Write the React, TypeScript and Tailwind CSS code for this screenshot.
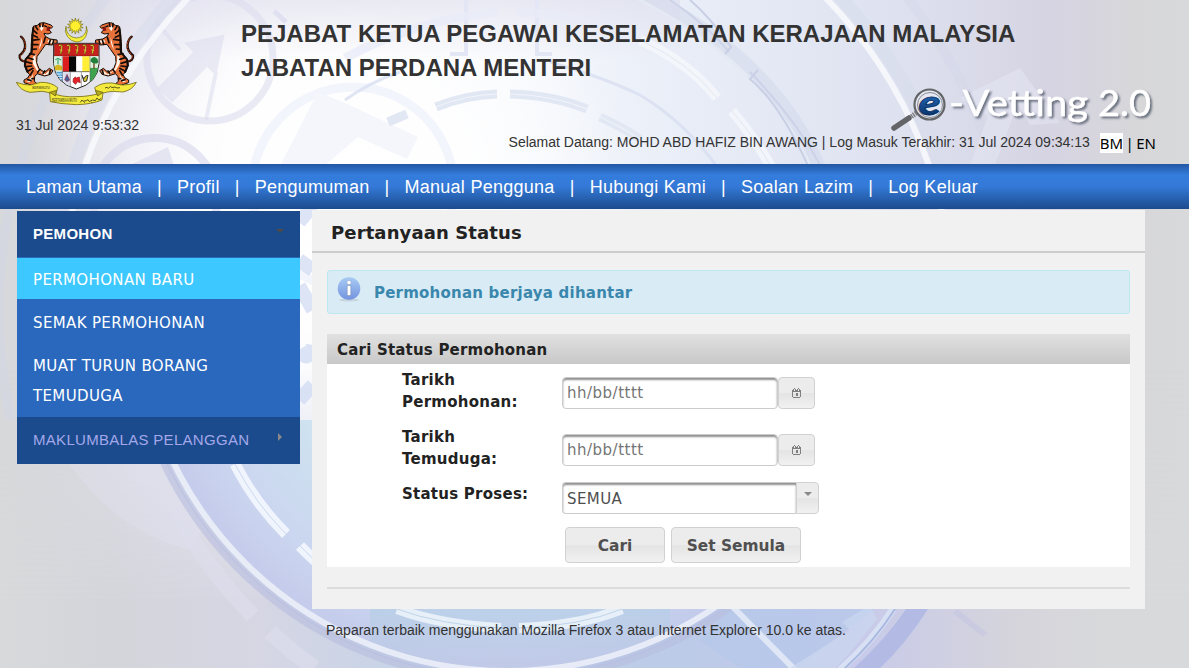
import React from "react";

const VERDANA = "font-['DejaVu_Sans',sans-serif]";

function Backdrop() {
  return (
    <svg className="absolute inset-0 -z-10 h-full w-full" viewBox="0 0 1189 668" preserveAspectRatio="none" aria-hidden="true">
      <defs>
        <linearGradient id="base" x1="0" x2="1" y1="0" y2="0">
          <stop offset="0" stopColor="#d7d8da" />
          <stop offset="0.05" stopColor="#d9d9df" />
          <stop offset="0.13" stopColor="#e3e2f0" />
          <stop offset="0.22" stopColor="#f4f4fb" />
          <stop offset="0.42" stopColor="#f7f9fd" />
          <stop offset="0.58" stopColor="#e8edf7" />
          <stop offset="0.74" stopColor="#dfe3f1" />
          <stop offset="0.88" stopColor="#d6d4e3" />
          <stop offset="0.96" stopColor="#d7d7d9" />
          <stop offset="1" stopColor="#d8d9db" />
        </linearGradient>
        <radialGradient id="glow" cx="330" cy="190" r="300" gradientUnits="userSpaceOnUse">
          <stop offset="0" stopColor="#ffffff" />
          <stop offset="0.45" stopColor="#ffffff" stopOpacity="0.9" />
          <stop offset="1" stopColor="#ffffff" stopOpacity="0" />
        </radialGradient>
        <linearGradient id="topShade" x1="0" x2="0" y1="0" y2="1">
          <stop offset="0" stopColor="#dcdbeb" stopOpacity="0.55" />
          <stop offset="1" stopColor="#dcdbeb" stopOpacity="0" />
        </linearGradient>
        <linearGradient id="low" x1="0" x2="1" y1="0" y2="0">
          <stop offset="0" stopColor="#d8d9db" />
          <stop offset="0.09" stopColor="#d4d5da" />
          <stop offset="0.22" stopColor="#d6d6e4" />
          <stop offset="0.4" stopColor="#bed2e9" />
          <stop offset="0.58" stopColor="#bccbe8" />
          <stop offset="0.72" stopColor="#c7caea" />
          <stop offset="0.85" stopColor="#d5d4dc" />
          <stop offset="0.93" stopColor="#d8d9db" />
          <stop offset="1" stopColor="#d8d9db" />
        </linearGradient>
        <linearGradient id="fade" x1="0" x2="0" y1="0" y2="1">
          <stop offset="0.55" stopColor="#fff" stopOpacity="0" />
          <stop offset="0.9" stopColor="#fff" />
        </linearGradient>
        <mask id="lowMask">
          <rect width="1189" height="668" fill="url(#fade)" />
        </mask>
        <radialGradient id="disc" cx="507" cy="305" r="372" gradientUnits="userSpaceOnUse">
          <stop offset="0.6" stopColor="#cfe6f1" />
          <stop offset="0.85" stopColor="#cbd7f1" />
          <stop offset="1" stopColor="#c4caec" />
        </radialGradient>
        <linearGradient id="discBlue" x1="0" x2="0" y1="600" y2="668" gradientUnits="userSpaceOnUse">
          <stop offset="0" stopColor="#b4cfe6" />
          <stop offset="1" stopColor="#bfc9e6" />
        </linearGradient>
        <clipPath id="lowerHalf">
          <rect x="0" y="420" width="1189" height="248" />
        </clipPath>
        <clipPath id="upperHalf">
          <rect x="0" y="0" width="1189" height="420" />
        </clipPath>
        <clipPath id="discClip">
          <circle cx="507" cy="300" r="370" />
        </clipPath>
      </defs>
      <rect width="1189" height="668" fill="url(#base)" />
      <rect width="1189" height="668" fill="url(#glow)" />
      <rect x="120" width="560" height="60" fill="url(#topShade)" />
      <rect width="1189" height="668" fill="url(#low)" mask="url(#lowMask)" />

      <g clipPath="url(#upperHalf)" fill="none">
        <circle cx="210" cy="58" r="63" stroke="#dcdcee" strokeWidth="7" opacity="0.6" />
        <path d="M160 88 L196 52 L188 44 L222 37 L215 72 L207 64 L172 100Z M180 50 L156 22 M216 72 L206 120" fill="#dadbed" stroke="#dadbed" strokeWidth="4" opacity="0.5" />
        <circle cx="155" cy="200" r="62" stroke="#d9d9ed" strokeWidth="8" opacity="0.65" />
        <path d="M128 166 L168 147 L174 166Z" fill="#d9d9ed" opacity="0.6" />
        <circle cx="353" cy="188" r="101" stroke="#f3f5fc" strokeWidth="9" />
        <path d="M280 166 L318 92 L345 103 L418 137 L407 159 L358 137 L324 166Z" fill="#f4f6fc" />
        <path d="M274 11 L286 22" stroke="#dfe1f1" strokeWidth="5" />
        <path d="M466 0V54 H450 M537 0V54 H552" stroke="#e3e6f5" strokeWidth="4" />
        <path d="M345 58 Q415 20 498 12 M518 12 Q620 18 690 66" stroke="#e9ecf7" strokeWidth="9" opacity="0.8" />
        <path d="M345 100 Q370 82 400 72 M550 62 Q605 78 640 95 Q685 122 718 168" stroke="#d7def0" strokeWidth="3" opacity="0.75" />
        <path d="M436 107 Q465 95 497 94 M510 94 Q552 95 587 109 M600 117 Q622 127 640 139 M388 122 L407 114" stroke="#e2e7f4" strokeWidth="9" />
        <path d="M436 107 Q465 95 497 94 M510 94 Q552 95 587 109 M600 117 Q622 127 640 139" stroke="#f2f5fb" strokeWidth="1" />
        <path d="M640 40 Q690 63 717 98 M732 111 Q755 138 773 170" stroke="#f5f7fb" strokeWidth="10" opacity="0.85" />
        <path d="M640 40 Q690 63 717 98 M732 111 Q755 138 773 170" stroke="#e3e7f1" strokeWidth="1" />
        <path d="M640 -8 Q775 60 820 170" stroke="#d3d9eb" strokeWidth="14" opacity="0.55" />
        <path d="M632 -4 Q768 64 812 170" stroke="#e5e9f4" strokeWidth="3" />
        <path d="M670 0 Q707 25 729 52 M750 72 Q795 118 822 168" stroke="#ccd3e8" strokeWidth="2" />
        <path d="M690 0 Q710 17 731 47 L725 54 M758 70 L750 79 Q780 104 809 168" stroke="#c9d0e6" strokeWidth="2" />
        <circle cx="507" cy="310" r="446" stroke="#f7f8fc" strokeWidth="6" opacity="0.9" />
        <circle cx="507" cy="310" r="457" stroke="#d6dbec" strokeWidth="13" opacity="0.5" />
        <circle cx="507" cy="310" r="508" stroke="#d3d7e9" strokeWidth="10" opacity="0.4" />
        <path d="M960 98 L1020 68 L1060 123 L1030 125 L1018 104 L995 165 L970 165 L988 116Z" fill="#e6e8f3" opacity="0.5" />
        <path d="M299 222 L313 206 M299 260 L313 270 M299 286 L313 310 M299 350 Q309 365 313 345 M299 400 L313 385" stroke="#cdd8f2" strokeWidth="14" opacity="0.7" />
      </g>

      <g clipPath="url(#lowerHalf)" fill="none">
        <path d="M60 450 Q110 530 190 550 L240 464Z" fill="#e8ebf8" opacity="0.2" />
        <circle cx="507" cy="300" r="378" fill="#b9c2e3" opacity="0.6" />
        <circle cx="507" cy="300" r="370" fill="url(#disc)" opacity="0.85" />
        <g clipPath="url(#discClip)">
          <rect x="370" y="600" width="300" height="68" fill="url(#discBlue)" opacity="0.65" />
        </g>
        <circle cx="507" cy="300" r="380" stroke="#b7bddd" strokeWidth="7" opacity="0.6" />
        <circle cx="507" cy="300" r="371" stroke="#e9edf8" strokeWidth="6" opacity="0.95" />
        <path d="M235 464 Q255 503 286 534 M300 546 Q315 562 332 574" stroke="#f0f4fc" strokeWidth="11" />
        <path d="M235 464 Q255 503 286 534 M300 546 Q315 562 332 574" stroke="#cdd8ef" strokeWidth="1" />
        <path d="M397 609 Q440 625 501 628 M519 628 Q580 626 622 609" stroke="#e7f0f8" strokeWidth="10" />
        <path d="M397 609 Q440 625 501 628 M519 628 Q580 626 622 609" stroke="#c0d3e9" strokeWidth="1" />
        <path d="M175 510 Q205 567 253 616 M270 632 Q294 654 315 668" stroke="#dddeed" strokeWidth="16" opacity="0.6" />
        <path d="M735 605 H880 L796 668 L740 668 L700 640Z" fill="#b5c7ea" opacity="0.7" />
        <path d="M732 606 L797 672" stroke="#dfe7f6" strokeWidth="6" />
        <path d="M870 605 L877 619 L848 655 L835 668 H790 L850 630 L842 622Z" fill="#cbd7f0" opacity="0.7" />
        <path d="M906 609 H928 Q905 645 880 668 H854 Q885 640 906 609Z" fill="#b0b9e3" opacity="0.9" />
        <path d="M893 609 Q872 642 840 670" stroke="#d8e0f3" strokeWidth="7" />
        <path d="M895 609 Q874 642 843 670" stroke="#aab9e2" strokeWidth="2" />
        <path d="M955 611 L985 635" stroke="#bfc1e4" strokeWidth="6" opacity="0.4" />
      </g>
    </svg>
  );
}

function Tiger() {
  return (
    <g strokeLinecap="round" strokeLinejoin="round">
      <path d="M77 184 Q57 182 59 165 Q78 150 75 132 Q73 116 63 109" fill="none" stroke="#210d05" strokeWidth="7" />
      <path d="M77 184 Q59 180 61 165 Q79 150 76 132 Q74 118 65 110" fill="none" stroke="#b8431a" strokeWidth="3" strokeDasharray="6 5" />
      <path d="M102 77 L112 75 L122 68 L132 67 L153 74 L158 79 L154 84 L144 80 L142 88 L150 91 L154 97 L144 101 L132 99 L136 108 L150 116 L171 119 L172 127 L156 134 L137 132 L126 148 L111 169 L110 187 L117 205 L134 216 L148 204 L159 211 L152 222 L134 227 L111 220 L104 229 L103 243 L111 250 L96 255 L72 247 L72 239 L83 233 L89 223 L80 213 L73 195 L75 179 L93 157 L94 128 L96 108 L98 91Z" fill="#e8713a" stroke="#160d08" strokeWidth="3" />
      <path d="M126 111 Q128 137 108 159 Q103 180 113 203 L122 216 L111 211 L99 190 L97 173 L116 148Z M118 80 L126 75 L131 83 L124 93Z M146 118 L165 122 L158 130 L142 125Z M99 221 L97 240 L88 246 L80 243 L94 231Z M118 212 L136 221 L147 211 L154 213 L148 221 L132 225Z" fill="#fff5ea" />
      <path d="M99 89 L111 99 M97 104 L112 111 M96 120 L117 117 M95 133 L114 133 M97 147 L109 146 M89 160 L104 163 M82 172 L99 177 M77 184 L95 189 M78 199 L95 197 M84 212 L99 204 M91 224 L99 211 M107 78 L113 88 M119 70 L120 79 M113 216 L120 207 M129 220 L134 212 M148 221 L151 210 M136 111 L131 127 M151 119 L147 132 M161 121 L158 130 M96 235 L102 235 M83 238 L93 241 M130 70 L128 78" fill="none" stroke="#160d08" strokeWidth="5" />
      <path d="M100 82 L97 106 L97 130 L95 156 L77 177 L75 196 L83 215" fill="none" stroke="#160d08" strokeWidth="6" />
      <path d="M141 80 L152 84 L148 91 L139 91Z" fill="#8e160f" />
      <path d="M134 77 L140 79" stroke="#160d08" strokeWidth="4" />
    </g>
  );
}

function CoatOfArms() {
  const points = Array.from({ length: 14 }, (_, i) => {
    const a = (i * Math.PI * 2) / 14;
    const b = a + Math.PI / 14;
    return `${223 + 24 * Math.sin(a)},${77 - 24 * Math.cos(a)} ${223 + 14 * Math.sin(b)},${77 - 14 * Math.cos(b)}`;
  }).join(" ");
  return (
    <svg className="block h-[90px] w-[123px]" viewBox="45 50 369 270" aria-label="Jata Negara">
      <path d="M198 78 Q192 92 202 108 Q213 124 230 125 Q248 124 257 109 Q266 93 259 78 Q261 98 247 108 Q229 118 211 107 Q198 96 198 78Z" fill="#f6ef3c" stroke="#6c6a14" strokeWidth="2" />
      <polygon points={points} transform="translate(3 0)" fill="#ffef2e" stroke="#77701a" strokeWidth="2" />
      <Tiger />
      <g transform="translate(458 0) scale(-1 1)">
        <Tiger />
      </g>
      <path d="M161 129 H297 V190 Q294 248 229 266 Q164 248 161 190Z" fill="#fff" stroke="#222" strokeWidth="3" />
      <path d="M163 131 H295 V167 H163Z" fill="#cb211e" stroke="#751914" strokeWidth="2" />
      {[183, 207, 231, 255, 278].map((x) => (
        <g key={x}>
          <path d={`M${x - 7} 136 Q${x + 4} 130 ${x + 2} 143 L${x - 1} 161`} fill="none" stroke="#5f5d14" strokeWidth="5" />
          <path d={`M${x - 6} 136 Q${x + 4} 132 ${x + 2} 144 L${x - 1} 159`} fill="none" stroke="#f5df3b" strokeWidth="2.5" />
          <path d={`M${x - 4} 148 L${x + 4} 151`} stroke="#f5df3b" strokeWidth="2" />
        </g>
      ))}
      <path d="M188 168 H207 V214 H188Z" fill="#dc1d1d" />
      <path d="M207 168 H229 V214 H207Z" fill="#080808" />
      <path d="M229 168 H247 V214 H229Z" fill="#fff" />
      <path d="M247 168 H269 V214 H247Z" fill="#ffee35" />
      <path d="M163 168 H187 V214 H168 L163 194Z" fill="#d9f0e0" />
      <path d="M163 199 Q174 188 187 199 V210 H166Z" fill="#d6b51f" />
      <path d="M174 177 V192 M166 178 Q174 170 183 179" fill="none" stroke="#169652" strokeWidth="3" />
      <path d="M168 214 H188 V243 Q176 234 168 214Z" fill="#4b9bd5" />
      <path d="M169 221 H188 M173 228 H188 M179 235 H188" stroke="#e5f6ff" strokeWidth="3" />
      <path d="M270 168 H295 L294 200 H270Z" fill="#dff2dd" />
      <path d="M270 202 H294 Q290 231 270 244Z" fill="#3fa34d" />
      <path d="M282 185 V205" stroke="#69421b" strokeWidth="4" />
      <path d="M271 183 Q272 171 283 170 Q296 174 294 187 Q283 194 271 183Z" fill="#218039" />
      <path d="M188 214 H269" stroke="#333" strokeWidth="2" />
      <path d="M190 216 H211 V259 Q198 253 190 245Z" fill="#d7dcec" />
      <path d="M194 238 L201 222 L209 239 Q201 248 194 238Z" fill="#405e9c" stroke="#a63442" strokeWidth="2" />
      <path d="M220 235 Q227 226 229 233 L238 230 L241 247 L232 244 L227 252 L219 245Z" fill="#e42428" stroke="#8f1619" strokeWidth="2" />
      <path d="M246 225 L251 236 L257 227 L264 225 L260 242 L252 244Z" fill="#d9c62e" stroke="#333" strokeWidth="3" />
      <path d="M211 214 V260 M244 214 V260 M187 168 V244 M270 168 V244" stroke="#555" strokeWidth="1.5" />
      <g fill="#f4ea3e" stroke="#756b16" strokeWidth="2.5" strokeLinejoin="round">
        <path d="M49 246 Q72 255 92 254 L122 246 Q154 245 173 262 L166 288 Q154 276 126 273 L90 276 Q61 271 49 246Z" />
        <path d="M409 246 Q386 255 366 254 L336 248 Q304 246 284 262 L293 287 Q307 276 336 273 L368 275 Q397 270 409 246Z" />
        <path d="M149 276 Q188 292 228 289 Q272 289 309 276 L306 299 Q275 312 229 313 Q182 311 151 304Z" />
        <path d="M149 276 L170 270 L166 287Z M309 276 L286 270 L293 287Z" fill="#b5ab20" />
      </g>
      <text x="97" y="267" fontSize="12" fontWeight="bold" textLength="52" lengthAdjust="spacingAndGlyphs" className="font-['Liberation_Sans',sans-serif]" fill="#6d681f">BERSEKUTU</text>
      <text x="155" y="304" fontSize="14" fontWeight="bold" textLength="76" lengthAdjust="spacingAndGlyphs" className="font-['Liberation_Sans',sans-serif]" fill="#6d681f">BERTAMBAH MUTU</text>
      <path d="M315 263 L321 261 L325 264 L332 258 L335 262 L345 260 L351 263 L360 262 M241 306 L246 299 L249 303 L259 301 L264 298 L268 304 L278 299 L286 301 L291 293 L296 299 L304 294 M253 307 L255 306 M274 306 L277 307 M340 267 L342 267" fill="none" stroke="#5a5519" strokeWidth="3" />
    </svg>
  );
}

function VettingLogo() {
  return (
    <svg className="block h-[58px] w-[280px]" viewBox="882 78 280 58" aria-label="e-Vetting 2.0">
      <defs>
        <linearGradient id="eBlue" x1="0" x2="0" y1="0" y2="1">
          <stop offset="0" stopColor="#76b9ef" />
          <stop offset="0.45" stopColor="#1c5ba8" />
          <stop offset="1" stopColor="#06254f" />
        </linearGradient>
        <filter id="shadow" x="-10%" y="-20%" width="120%" height="150%">
          <feDropShadow dx="2" dy="2" stdDeviation="1.1" floodColor="#4c5265" floodOpacity="0.8" />
        </filter>
      </defs>
      <circle cx="929.5" cy="104.5" r="15" fill="#e5e8f2" stroke="#636568" strokeWidth="2.2" />
      <circle cx="930" cy="105" r="12.5" fill="none" stroke="#8a8c92" strokeWidth="1" />
      <path d="M894 128 L909 118" stroke="#626468" strokeWidth="5.5" strokeLinecap="round" />
      <path d="M911.500 116.500 L917 112.500" stroke="#777" strokeWidth="5" strokeDasharray="1.300 1" />
      <text x="918.5" y="115" fontSize="35" fontWeight="900" fontStyle="italic" textLength="22" lengthAdjust="spacingAndGlyphs" className="font-['Lato',sans-serif]" fill="url(#eBlue)" stroke="#0b3264" strokeWidth="0.8">e</text>
      <g filter="url(#shadow)" fill="#fff" stroke="#fff" strokeWidth="0.4" className="font-['Lato',sans-serif]">
        <text x="949" y="115.500" fontSize="36.500" textLength="139" lengthAdjust="spacingAndGlyphs">-Vetting</text>
        <text x="1098" y="115.500" fontSize="36" textLength="53" lengthAdjust="spacingAndGlyphs">2.0</text>
      </g>
    </svg>
  );
}

const NAV = ["Laman Utama", "Profil", "Pengumuman", "Manual Pengguna", "Hubungi Kami", "Soalan Lazim", "Log Keluar"];

function Header() {
  return (
    <header className="flex h-[164px] shrink-0">
      <div className="w-[241px] shrink-0 pt-[17px] pl-[15px]">
        <CoatOfArms />
        <p className="mt-2.5 ml-px text-[14px] leading-4 text-[#333]">31 Jul 2024 9:53:32</p>
      </div>
      <div className="flex grow flex-col">
        <h1 className="pt-[17px] text-[24px] leading-[34px] font-bold whitespace-nowrap text-[#333]">
          PEJABAT KETUA PEGAWAI KESELAMATAN KERAJAAN MALAYSIA
          <br />
          JABATAN PERDANA MENTERI
        </h1>
        <div className="-mt-[7px] flex justify-end pr-[27px]">
          <VettingLogo />
        </div>
        <div className="-mt-1 flex items-center justify-end pr-[33px] text-[14px] leading-[18px] whitespace-nowrap text-[#333]">
          <p>Selamat Datang: MOHD ABD HAFIZ BIN AWANG | Log Masuk Terakhir: 31 Jul 2024 09:34:13</p>
          <p className="mt-0.5 ml-[10px] font-['Noto_Sans',sans-serif] text-[15px] text-black [word-spacing:-1.5px]">
            <span className="bg-white">BM</span> | EN
          </p>
        </div>
      </div>
    </header>
  );
}

function Sidebar() {
  return (
    <aside className="mt-0.5 ml-[17px] h-[253px] w-[283px] shrink-0 bg-[#2968bd] text-[15px] tracking-[0.3px] text-white">
      <div className="flex h-[47px] items-center justify-between border-b border-[#2968bd] bg-[#1b4b8d] pr-[16px] pl-4 font-bold">
        <span>PEMOHON</span>
        <span className="mb-[7px] border-x-[4px] border-t-[4px] border-x-transparent border-t-[#4a4a4a]" />
      </div>
      <ul className={`${VERDANA} tracking-[0.36px]`}>
        <li className="flex h-[41px] items-center bg-[#3dc8ff] pt-[3px] pl-4">PERMOHONAN BARU</li>
        <li className="flex h-[47px] items-center pt-0.5 pl-4">SEMAK PERMOHONAN</li>
        <li className="flex h-[71px] items-center pb-0.5 pl-4 leading-[30px]">
          MUAT TURUN BORANG
          <br />
          TEMUDUGA
        </li>
      </ul>
      <div className="flex h-[47px] items-center justify-between bg-[#1b4b8d] pr-[18px] pl-4 text-[#a4a7e9]">
        <span>MAKLUMBALAS PELANGGAN</span>
        <span className="mb-[7px] border-y-[4px] border-l-[4px] border-y-transparent border-l-[#888]" />
      </div>
    </aside>
  );
}

function CalendarIcon() {
  return (
    <svg width="9" height="10" viewBox="0 0 9 10" shapeRendering="crispEdges" aria-hidden="true">
      <path d="M0 2H9V4H0Z M0 4H1V9H0Z M8 4H9V9H8Z M1 9H8V10H1Z M4 5H6V8H4Z" fill="#808080" />
      <path d="M1 1H2V2H1Z M3 1H4V2H3Z M5 1H6V2H5Z M7 1H8V2H7Z M2 0H3V1H2Z M6 0H7V1H6Z" fill="#808080" />
      <path d="M2 2H3V3H2Z M6 2H7V3H6Z" fill="#eee" />
    </svg>
  );
}

const BUTTON = "border border-[#d1d1d1] bg-[linear-gradient(#ececec_0%,#ececec_50%,#e4e4e4_52%,#f1f1f1_100%)]";
const FIELD = "border border-[#ccc] bg-white shadow-[inset_0_2px_2px_#8f8f8f]";

function DateField() {
  return (
    <div className="flex h-8">
      <input className={`${FIELD} w-[216px] rounded-[4px] px-1 text-[15px] tracking-[0.5px] outline-none placeholder:text-[#757575]`} placeholder="hh/bb/tttt" />
      <button className={`${BUTTON} flex w-[37px] items-center justify-center rounded-[4px] pr-px`} aria-label="Kalendar">
        <CalendarIcon />
      </button>
    </div>
  );
}

function Main() {
  return (
    <main className={`ml-3 mt-px h-[399px] w-[833px] bg-[#f1f1f1] text-[#222] ${VERDANA}`}>
      <h2 className="flex h-[43px] items-center border-b-2 border-[#ccc] pl-[19px] pt-[3px] text-[18px] font-bold tracking-[0.12px]">Pertanyaan Status</h2>
      <div className="px-[15px] pt-[17px]">
        <div className="flex h-[44px] items-center rounded-[3px] border border-[#bce8f1] bg-[#d9ebf5] pl-[9px] text-[15px] font-bold tracking-[0.22px] text-[#3a87ad]">
          <svg className="mb-1.5 shrink-0" width="24" height="26" viewBox="0 0 24 26" aria-hidden="true">
            <defs>
              <linearGradient id="info" x1="0" x2="0" y1="0" y2="1">
                <stop stopColor="#a7cbf4" />
                <stop offset="1" stopColor="#7493df" />
              </linearGradient>
            </defs>
            <ellipse cx="12" cy="24" rx="10" ry="1.500" fill="#b9c5d1" opacity="0.6" />
            <circle cx="12" cy="12.500" r="11.300" fill="url(#info)" />
            <path d="M10.200 9.500H13.800V19.500H10.200Z" fill="#fff" stroke="#7184a8" strokeWidth="0.500" />
            <circle cx="12" cy="6.500" r="2.100" fill="#fff" stroke="#7184a8" strokeWidth="0.300" />
          </svg>
          <span className="ml-3 pt-0.5 pl-px">Permohonan berjaya dihantar</span>
        </div>
        <section className="mt-5 h-[233px] bg-white">
          <h3 className="flex h-[30px] items-center bg-linear-to-b from-[#e1e1e1] to-[#c8c8c8] pt-0.5 pl-2.5 text-[15px] font-bold tracking-[0.2px]">Cari Status Permohonan</h3>
          <div className="grid grid-cols-[161px_1fr] pt-[5px] pl-[74px] text-[15px] tracking-[0.25px]">
            <label className="h-[57px] pl-px leading-[22px] font-bold">Tarikh<br />Permohonan:</label>
            <div className="pt-2"><DateField /></div>
            <label className="h-[57px] pl-px leading-[22px] font-bold">Tarikh<br />Temuduga:</label>
            <div className="pt-2"><DateField /></div>
            <label className="h-[44px] pl-px leading-[22px] font-bold">Status Proses:</label>
            <div className="-mt-px flex h-8 w-[257px] overflow-hidden">
              <div className={`${FIELD} flex grow items-center rounded-l-[4px] border-r-0 pt-0.5 pl-1 tracking-[0.4px] text-[#4f4f4f]`}>SEMUA</div>
              <div className={`${BUTTON} flex w-[23px] justify-center rounded-r-[4px] pt-[9px]`}>
                <span className="h-0 border-x-[4px] border-t-[4px] border-x-transparent border-t-[#888]" />
              </div>
            </div>
          </div>
          <div className="flex gap-1.5 pl-[238px] text-[#4f4f4f]">
            <button className={`${BUTTON} h-9 w-[100px] rounded-[4px] pt-[3px] text-[15.400px] font-bold`}>Cari</button>
            <button className={`${BUTTON} h-9 w-[130px] rounded-[4px] pt-[3px] text-[15.400px] font-bold`}>Set Semula</button>
          </div>
        </section>
        <hr className="mt-5 border-t-2 border-[#dcdcdc]" />
      </div>
    </main>
  );
}

export default function App() {
  return (
    <div className="relative isolate flex h-screen min-h-[668px] w-full flex-col overflow-hidden font-['Liberation_Sans',sans-serif]">
      <Backdrop />
      <Header />
      <nav className="flex h-[45px] shrink-0 items-center bg-[linear-gradient(#2257a3_0%,#347ddd_25%,#3479d7_50%,#1b4b8d_100%)] pt-px pl-[26px] text-[18px] tracking-[0.27px] whitespace-nowrap text-white">
        {NAV.map((label, i) => (
          <React.Fragment key={label}>
            {i > 0 && <span className="w-[35px] text-center">|</span>}
            <a>{label}</a>
          </React.Fragment>
        ))}
      </nav>
      <div className="flex shrink-0 items-start">
        <Sidebar />
        <Main />
      </div>
      <footer className="mt-[13px] ml-[326px] text-[14px] leading-4 text-[#333]">Paparan terbaik menggunakan Mozilla Firefox 3 atau Internet Explorer 10.0 ke atas.</footer>
    </div>
  );
}
